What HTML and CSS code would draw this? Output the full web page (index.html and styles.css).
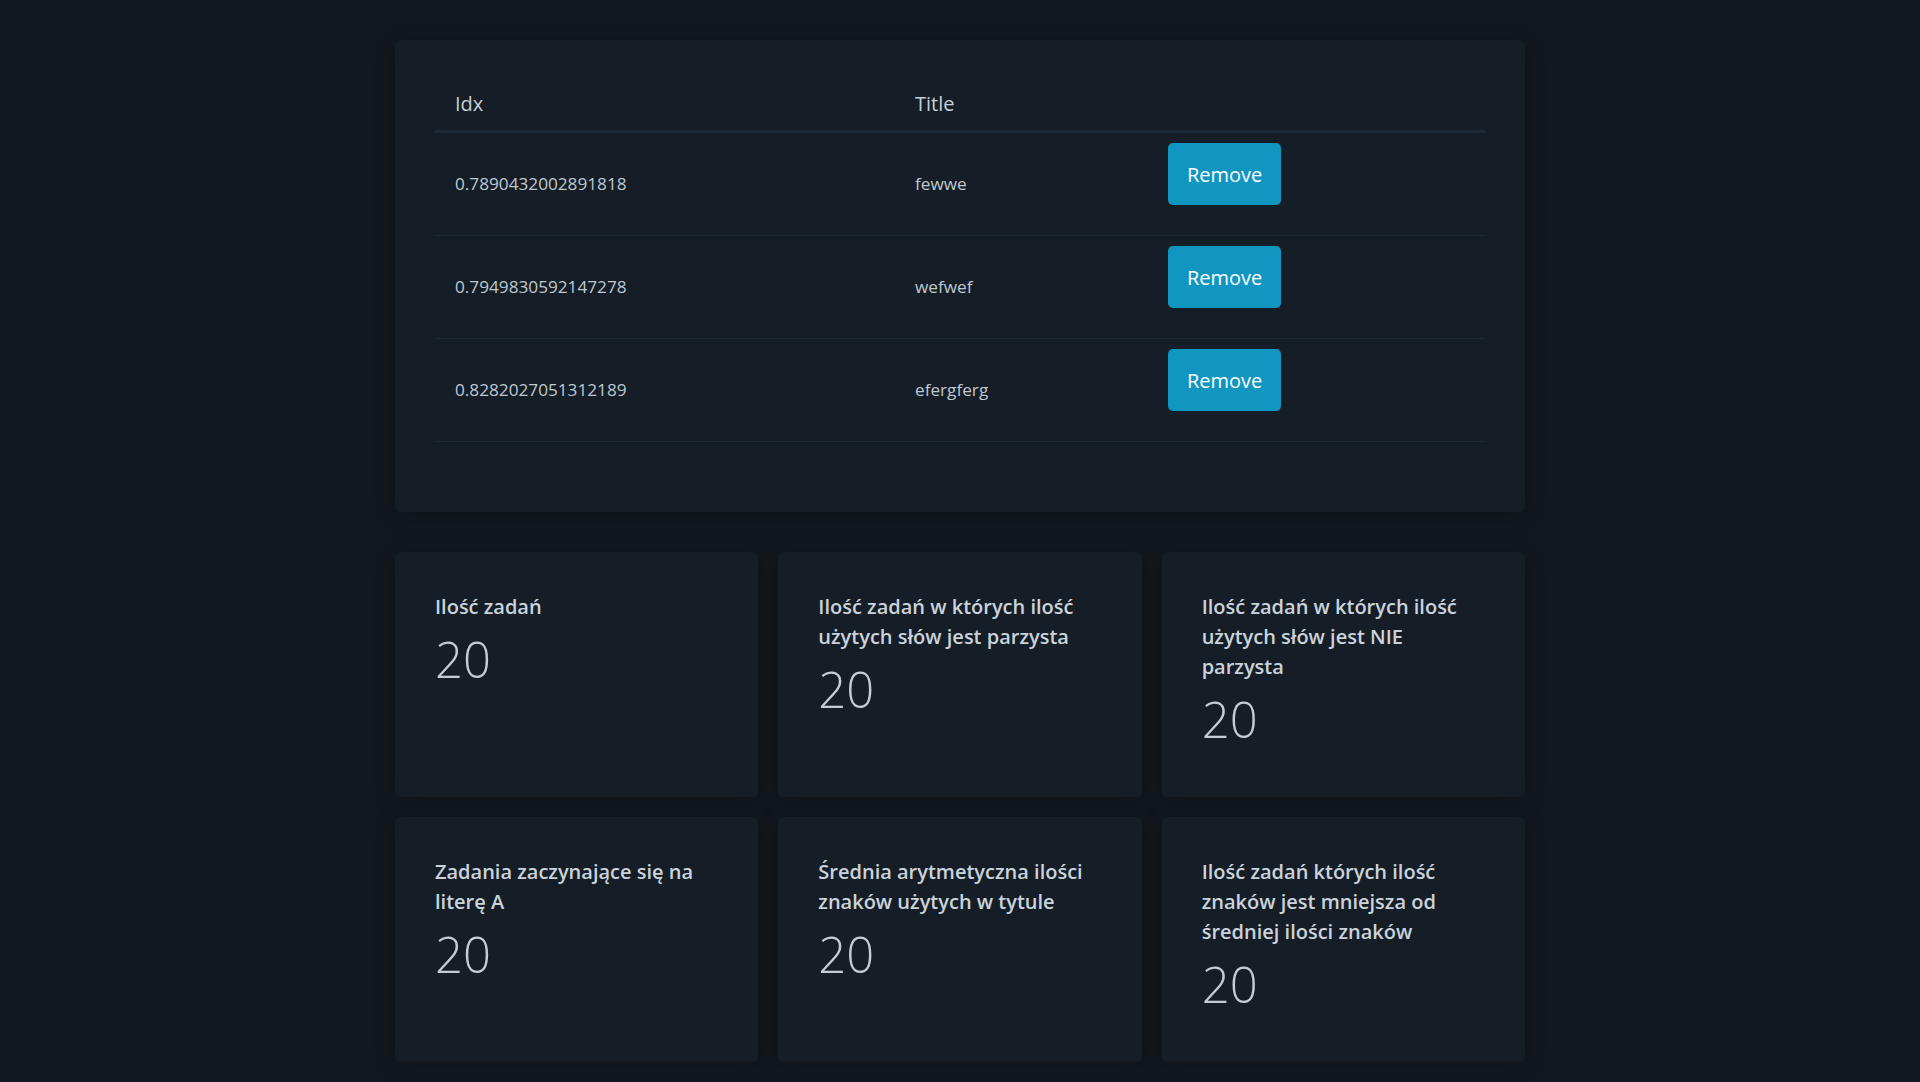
FILE: index.html
```html
<!DOCTYPE html>
<html lang="pl">
<head>
<meta charset="utf-8">
<title>Zadania</title>
<link rel="stylesheet" href="styles.css">
</head>
<body>
<main class="container">
  <section class="card table-card">
    <table class="tasks">
      <thead>
        <tr>
          <th class="col-idx">Idx</th>
          <th class="col-title">Title</th>
          <th class="col-action"></th>
        </tr>
      </thead>
      <tbody>
        <tr>
          <td>0.7890432002891818</td>
          <td>fewwe</td>
          <td><button class="btn">Remove</button></td>
        </tr>
        <tr>
          <td>0.7949830592147278</td>
          <td>wefwef</td>
          <td><button class="btn">Remove</button></td>
        </tr>
        <tr>
          <td>0.8282027051312189</td>
          <td>efergferg</td>
          <td><button class="btn">Remove</button></td>
        </tr>
      </tbody>
    </table>
  </section>

  <section class="stats">
    <div class="card stat">
      <h3 class="stat-title">Ilość zadań</h3>
      <p class="stat-value">20</p>
    </div>
    <div class="card stat">
      <h3 class="stat-title">Ilość zadań w których ilość użytych słów jest parzysta</h3>
      <p class="stat-value">20</p>
    </div>
    <div class="card stat">
      <h3 class="stat-title">Ilość zadań w których ilość użytych słów jest NIE parzysta</h3>
      <p class="stat-value">20</p>
    </div>
    <div class="card stat">
      <h3 class="stat-title">Zadania zaczynające się na literę A</h3>
      <p class="stat-value">20</p>
    </div>
    <div class="card stat">
      <h3 class="stat-title">Średnia arytmetyczna ilości znaków użytych w tytule</h3>
      <p class="stat-value">20</p>
    </div>
    <div class="card stat">
      <h3 class="stat-title">Ilość zadań których ilość znaków jest mniejsza od średniej ilości znaków</h3>
      <p class="stat-value">20</p>
    </div>
  </section>
</main>
</body>
</html>
```

FILE: styles.css
```css
* {
  box-sizing: border-box;
}

html, body {
  margin: 0;
  padding: 0;
}

body {
  background: #12181e;
  color: #c2cbd4;
  font-family: "Open Sans", "Noto Sans", "DejaVu Sans", sans-serif;
  min-height: 100vh;
}

.container {
  width: 1130px;
  margin: 0 auto;
  padding-top: 40px;
}

.card {
  background: #151e26;
  border-radius: 6px;
  box-shadow: 0 4px 22px rgba(0, 0, 0, 0.18);
}

.table-card {
  padding: 40px 40px 40px;
}

.tasks {
  width: 100%;
  border-collapse: collapse;
  margin-bottom: 30px;
}

.tasks th {
  text-align: left;
  font-weight: 400;
  font-size: 20px;
  line-height: 30px;
  color: #c6cfd8;
  padding: 9px 20px 11px;
  border-bottom: 3px solid #1e2a35;
}

.col-idx {
  width: 460px;
}

.col-title {
  width: 253px;
}

.tasks td {
  font-size: 17.2px;
  line-height: 24px;
  color: #bfc8d1;
  padding: 10px 20px;
  vertical-align: middle;
  border-bottom: 1px solid #1d2933;
}

.btn {
  display: inline-flex;
  align-items: center;
  justify-content: center;
  height: 62px;
  padding: 0 19px;
  margin-bottom: 20px;
  vertical-align: top;
  border: 0;
  border-radius: 5px;
  background: #1196c2;
  color: #ffffff;
  font-family: inherit;
  font-size: 20px;
  cursor: pointer;
}

.stats {
  margin-top: 40px;
  display: grid;
  grid-template-columns: repeat(3, 1fr);
  gap: 20px;
  padding-bottom: 40px;
}

.stat {
  padding: 40px;
}

.stat-title {
  margin: 0;
  font-size: 20px;
  line-height: 30px;
  font-weight: 600;
  color: #cad3dc;
}

.stat-value {
  margin: 0;
  font-size: 49px;
  line-height: 75px;
  font-weight: 300;
  color: #c4ccd5;
}
```
